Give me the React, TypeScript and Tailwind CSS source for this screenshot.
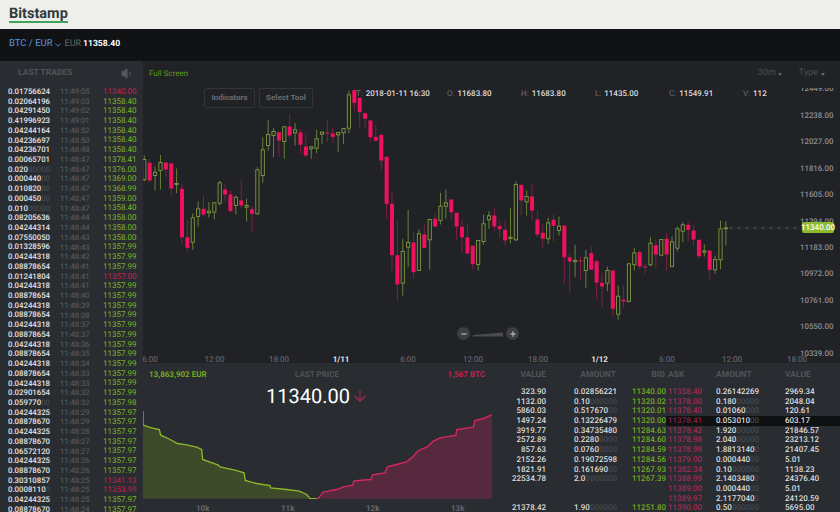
import { ChevronDown, Volume1, Plus, Minus, ArrowDown } from 'lucide-react'

// [wick top, body top, body bottom, wick bottom, up]
const candles: [number, number, number, number, number][] = [
  [155, 159, 179, 181, 1], [159, 162.3, 180, 182, 0], [166, 171.7, 175, 190, 1], [154.5, 162, 170, 189, 1],
  [161, 162, 169, 177, 0], [162, 163, 188, 195, 0], [168, 183, 184, 192.7, 1], [183, 188.3, 236.7, 243, 0],
  [219, 236.7, 247.3, 250.7, 0], [213, 217.3, 241.7, 249.3, 1], [201, 208.3, 216, 226, 1], [195, 208.3, 214, 216, 0],
  [201.7, 210.7, 212.3, 217, 1], [202, 202.3, 211.7, 219, 1], [180, 182.3, 202.7, 205, 1], [182.7, 189, 194, 200.7, 0],
  [190, 194, 210.7, 211, 0], [195, 196.7, 205, 214, 1], [180, 200, 205, 207, 0], [198.3, 205, 206.7, 221, 1],
  [205, 208.7, 213.3, 231.3, 0], [166.7, 169.3, 213.3, 214.3, 1], [136.7, 149.3, 175, 182.3, 1], [119.3, 134, 145, 150, 1],
  [127.7, 131, 135, 156.7, 1], [131.7, 131.7, 140, 156.7, 0], [126, 126.3, 141, 158.3, 1], [114, 126, 135, 138, 0],
  [122.3, 129.3, 132.3, 145, 1], [128.3, 132, 144.3, 153.3, 0], [132.7, 146, 155, 157.7, 0], [146, 146.3, 148.3, 158.3, 1],
  [129, 138.3, 147.7, 152.7, 1], [131, 131.7, 133.7, 143.3, 1], [120, 132, 133, 141.7, 0], [126.7, 133, 136.3, 141.7, 0],
  [131.5, 132, 134.3, 151.7, 1], [128, 128, 132.3, 143.3, 1], [90, 94.3, 127.7, 132.7, 1], [89, 89.7, 102.3, 110, 0],
  [97, 97.3, 111.7, 127.7, 0], [112, 112.7, 118.3, 128, 0], [120, 120, 136.7, 141, 0], [124.3, 136.3, 140.3, 140.5, 0],
  [134, 134.3, 160, 169.3, 0], [156, 156.3, 203.3, 218.3, 0], [191, 203.3, 254.7, 270, 0], [220, 254.7, 284, 300.7, 0],
  [238.3, 251, 282.7, 295, 1], [209.3, 242, 246.7, 266.7, 1], [230.7, 242, 271.7, 277.7, 0], [229, 233.3, 270, 270, 1],
  [224, 234, 247.3, 247.5, 0], [219, 219, 239.3, 269.3, 1], [212.7, 218.3, 226, 226.5, 0], [192.3, 205.7, 220, 224, 1],
  [189, 202.3, 205.7, 218.3, 1], [199, 199, 211.7, 219, 0], [212, 212.3, 226, 239.3, 0], [220, 226.3, 236.7, 251.7, 0],
  [224, 237, 253, 254, 0], [245, 245.3, 263.7, 269, 0], [240, 240, 264, 270, 1], [214, 223.3, 241, 244, 1],
  [210.7, 215.3, 219.3, 228.3, 1], [207.3, 215, 226, 230.7, 0], [220.7, 225.7, 228.7, 237.3, 0], [220, 229.3, 240, 244.7, 0],
  [207.3, 236.7, 238, 242.7, 1], [181, 184, 239.3, 240.7, 1], [184, 184.3, 200, 215, 0], [190, 196, 201.3, 215, 1],
  [184, 196, 210, 220, 0], [210, 219, 234, 236.7, 0], [223.3, 232.3, 238.3, 246.7, 0], [217.3, 222.3, 238.3, 243.3, 1],
  [213.3, 219.3, 225.3, 241.7, 0], [216, 225.7, 230, 235, 1], [225, 225, 256.7, 283.3, 0], [253, 256.7, 261, 292.3, 0],
  [244.3, 260, 261.3, 276.7, 1], [256, 260, 261, 279.3, 0], [249.3, 257.3, 270, 287.3, 1], [246, 252.7, 269.3, 269.5, 0],
  [259, 260.7, 282, 298.3, 0], [272.7, 282.3, 286, 306.7, 0], [266, 270, 282.7, 290.7, 1], [270, 270, 308.3, 316.7, 0],
  [285, 295.7, 313.7, 319.3, 1], [285, 299.3, 301, 307.3, 0], [263, 263.3, 301, 301.7, 1], [247.3, 252.3, 264.3, 270, 1],
  [250, 251.7, 266, 269.3, 0], [262.7, 266, 267, 273.3, 0], [236.7, 242.7, 264.3, 266, 1], [239, 244.7, 254, 268.3, 0],
  [239, 239, 254.7, 255, 1], [232.3, 238.3, 254, 270, 0], [236, 241.3, 266, 266.7, 1], [226, 228.3, 247.7, 250.7, 1],
  [221.7, 224.3, 230.7, 241.7, 1], [221.7, 224.3, 229.3, 241, 0], [225, 230, 239, 245, 0], [239, 239.3, 255.7, 257.7, 0],
  [244, 250.3, 251.7, 256, 1], [250, 250, 269.3, 279, 0], [255, 259, 269.3, 273.3, 1], [220, 228.3, 259.3, 268.7, 1],
  [220.7, 227.3, 228.3, 245, 1],
]

const priceAxis = [
  ['12449.00', 88], ['12238.00', 114.7], ['12027.00', 141], ['11816.00', 167.7], ['11605.00', 194], ['11394.00', 220.7],
  ['11183.00', 246.5], ['10972.00', 273], ['10761.00', 299.3], ['10550.00', 326], ['10339.00', 352.7],
] as const

const timeAxis = [
  ['6:00', 150, false], ['12:00', 214.5, false], ['18:00', 279, false], ['1/11', 341, true], ['6:00', 408, false],
  ['12:00', 473, false], ['18:00', 538, false], ['1/12', 599.5, true], ['6:00', 667, false], ['12:00', 732, false],
  ['18:00', 797, false],
] as const

// amount ("|" starts the dimmed zeros), time, price, sold
const trades: [string, string, string, boolean?][] = [
  ['0.01756624', '11:49:05', '11340.00', true], ['0.02064196', '11:49:03', '11358.40'], ['0.04291450', '11:49:02', '11358.40'],
  ['0.41996923', '11:49:01', '11358.40'], ['0.04244164', '11:48:52', '11358.40'], ['0.04236697', '11:48:50', '11358.40'],
  ['0.04236701', '11:48:48', '11358.40'], ['0.00065701', '11:48:47', '11378.41'], ['0.020|00000', '11:48:47', '11376.00'],
  ['0.000440|00', '11:48:47', '11369.00'], ['0.010820|00', '11:48:47', '11368.99'], ['0.000450|00', '11:48:47', '11359.00'],
  ['0.010|00000', '11:48:47', '11358.40'], ['0.08205636', '11:48:44', '11358.00'], ['0.04244314', '11:48:44', '11358.00'],
  ['0.07550050', '11:48:43', '11358.00'], ['0.01328596', '11:48:43', '11357.99'], ['0.04244318', '11:48:42', '11357.99'],
  ['0.08878654', '11:48:41', '11357.99'], ['0.01241804', '11:48:41', '11357.00', true], ['0.04244318', '11:48:41', '11357.99'],
  ['0.08878654', '11:48:40', '11357.99'], ['0.04244318', '11:48:39', '11357.99'], ['0.08878654', '11:48:38', '11357.99'],
  ['0.04244318', '11:48:37', '11357.99'], ['0.08878654', '11:48:37', '11357.99'], ['0.04244318', '11:48:36', '11357.99'],
  ['0.08878654', '11:48:35', '11357.99'], ['0.04244318', '11:48:34', '11357.99'], ['0.08878654', '11:48:33', '11357.99'],
  ['0.04244318', '11:48:33', '11357.99'], ['0.02901654', '11:48:32', '11357.99'], ['0.059770|00', '11:48:32', '11357.98'],
  ['0.04244325', '11:48:29', '11357.97'], ['0.08878670', '11:48:29', '11357.97'], ['0.04244325', '11:48:28', '11357.97'],
  ['0.08878670', '11:48:27', '11357.97'], ['0.06572120', '11:48:27', '11357.97'], ['0.04244325', '11:48:26', '11357.97'],
  ['0.08878670', '11:48:26', '11357.97'], ['0.30310857', '11:48:25', '11341.13', true], ['0.0008110|0', '11:48:25', '11353.99', true],
  ['0.04244325', '11:48:25', '11357.97'], ['0.08878670', '11:48:24', '11357.97'],
]

const book = [
  ['323.90', '0.02856221', '11340.00', '11358.40', '0.26142269', '2969.34'],
  ['1132.00', '0.10|000000', '11320.02', '11378.00', '0.180|00000', '2048.04'],
  ['5860.03', '0.517670|00', '11320.01', '11378.40', '0.01060|000', '120.61'],
  ['1497.24', '0.13226479', '11320.00', '11378.41', '0.053010|00', '603.17'],
  ['3919.77', '0.34735480', '11284.63', '11378.42', '1.920|00000', '21846.57'],
  ['2572.89', '0.2280|0000', '11284.60', '11378.98', '2.040|00000', '23213.12'],
  ['857.63', '0.0760|0000', '11284.59', '11378.99', '1.8813140|0', '21407.45'],
  ['2152.26', '0.19072598', '11284.56', '11379.00', '0.000440|00', '5.01'],
  ['1821.91', '0.161690|00', '11267.93', '11382.34', '0.10|000000', '1138.23'],
  ['22534.78', '2.0|0000000', '11267.39', '11388.99', '2.1403480|0', '24376.40'],
  ['', '', '', '11389.00', '0.000440|00', '5.01'],
  ['', '', '', '11389.97', '2.1177040|0', '24120.59'],
  ['21378.42', '1.90|000000', '11251.80', '11390.00', '0.50|000000', '5695.00'],
]

const ohlc = [
  ['T:', '2018-01-11 16:30', 'w-[91px]'], ['O:', '11683.80', 'w-[74px]'], ['H:', '11683.80', 'w-[74px]'],
  ['L:', '11435.00', 'w-[74px]'], ['C:', '11549.91', 'w-[74px]'], ['V:', '112', 'w-[40px]'],
]

const bidLine = '9,135 9,177 35,185 58,190 62,207 85,217 112,232 140,236 170,243 185,250 188,280 235,297 240,302 285,312 312,320 316,343 350,352 390,358 392,365 440,370 478,375 500,385 510,397 533,398'
const askLine = '533,398 550,378 590,370 610,362 638,357 642,344 692,340 698,326 735,320 742,302 770,295 800,287 820,270 835,253 860,243 880,225 900,215 948,207 950,190 1000,183 1005,163 1030,157 1056,145'

function Amount({ value }: { value: string }) {
  const [main, dim] = value.split('|')
  return (
    <>
      {main}
      {dim && <span className="text-[#44484e]">{dim}</span>}
    </>
  )
}

function Chart() {
  return (
    <svg viewBox="143 61 697 301" className="absolute inset-0 w-full h-full" fontFamily="Roboto, sans-serif">
      {candles.map(([wt, bt, bb, wb, up], i) => {
        const x = 144.3 + i * 5.385
        return (
          <g key={i}>
            <line x1={x} x2={x} y1={wt} y2={wb} stroke={up ? '#66803a' : '#7e1f47'} strokeWidth="1" />
            {up ? (
              <rect x={x - 1.6} y={bt} width="3.2" height={Math.max(bb - bt, 1)} fill="#212226" stroke="#7f9a3c" strokeWidth="0.9" />
            ) : (
              <rect x={x - 2} y={bt} width="4" height={Math.max(bb - bt, 1)} fill="#f0105f" />
            )}
          </g>
        )
      })}
      <line x1="729" x2="802" y1="227.5" y2="227.5" stroke="#50545a" strokeDasharray="4 4" />
      {priceAxis.map(([label, y]) => (
        <text key={label} x="833.5" y={y + 2.8} textAnchor="end" fontSize="7.9" fontWeight="500" fill="#8b8e92">{label}</text>
      ))}
      <rect x="780" y="61" width="60" height="26.5" fill="#212226" />
      {timeAxis.map(([label, x, bold], i) => (
        <text key={i} x={x} y="361" textAnchor="middle" fontSize="8" fontWeight={bold ? 700 : 400} fill={bold ? '#e6e6e6' : '#6f7276'}>{label}</text>
      ))}
      <path d="M473 334.5 L503 332 L503 336 L473 336 Z" fill="#4a4c51" />
    </svg>
  )
}

function BookRow({ row, active }: { row: string[]; active: boolean }) {
  return (
    <div className="relative flex h-[9.72px] items-center leading-none font-medium">
      {active && <div className="absolute right-0 top-0 bottom-0 left-[174px] bg-[#0f1012]" />}
      <span className="relative w-[54px] text-right text-[#dcdcdc]">{row[0]}</span>
      <span className="relative ml-[28px] w-[45px] text-[#dcdcdc]"><Amount value={row[1]} /></span>
      <span className="relative ml-[13px] w-[33px] text-[#76a821]">{row[2]}</span>
      <span className={`relative ml-[3px] w-[33px] ${active ? 'text-[#8a1f42]' : 'text-[#a52a52]'}`}>{row[3]}</span>
      <span className="relative ml-[15px] w-[45px] text-[#dcdcdc]"><Amount value={row[4]} /></span>
      <span className="relative ml-[24px] text-[#dcdcdc]">{row[5]}</span>
    </div>
  )
}

export default function App() {
  return (
    <div className="h-[512px] w-[840px] overflow-hidden flex flex-col bg-[#212226] font-['Roboto',sans-serif] [text-rendering:geometricPrecision]">
      <header className="h-[29px] shrink-0 bg-[#eeeeea] flex items-center pl-[9px]">
        <span className="text-[14.5px] leading-[15px] font-bold text-[#2f3a3a] border-b-2 border-[#3fa35b]">Bitstamp</span>
      </header>

      <nav className="h-[32px] shrink-0 bg-[#101214] flex items-center pl-[9px] text-[9.5px] pb-[1px]">
        <span className="text-[#5a9be0]">BTC / EUR</span>
        <ChevronDown className="w-[10px] h-[10px] text-[#5a9be0]" />
        <span className="ml-[2px] text-[9px] text-[#65686c]">EUR</span>
        <span className="ml-[2px] text-[8.6px] text-white font-bold">11358.40</span>
      </nav>

      <div className="flex flex-1 min-h-0">
        <aside className="w-[143px] shrink-0 bg-[#292d32] overflow-hidden">
          <div className="h-[26px] flex items-center justify-between pl-[18px] pr-[9px] pb-[1px]">
            <span className="text-[8.5px] font-bold text-[#50545a]">LAST TRADES</span>
            <Volume1 className="w-[13px] h-[13px] text-[#55595f] fill-[#55595f]" />
          </div>
          {trades.map(([amount, time, price, sold], i) => (
            <div key={i} className="flex h-[9.72px] items-center pl-[8px] text-[8px] leading-none">
              <span className="w-[52px] text-[7.8px] font-medium text-[#e4e4e4]"><Amount value={amount} /></span>
              <span className="w-[43px] text-[7.7px] text-[#5c6066]">{time}</span>
              <span className={sold ? 'text-[#c3204f]' : 'text-[#7fb324]'}>{price}</span>
            </div>
          ))}
        </aside>

        <main className="flex-1 min-w-0 flex flex-col">
          <section className="relative h-[302px] shrink-0 bg-[#212226] overflow-hidden">
            <Chart />
            <div className="absolute left-[6px] top-[7px] text-[8px] text-[#5f9a16]">Full Screen</div>
            <div className="absolute right-[15px] top-[6px] flex items-center gap-[17px] text-[9px] text-[#4d5055]">
              <span className="flex items-center gap-[2px]">30m<span className="w-0 h-0 border-x-[2.5px] border-x-transparent border-t-[3px] border-t-[#65686c] mt-[2px]" /></span>
              <span className="flex items-center gap-[3px]">Type<span className="w-0 h-0 border-x-[2.5px] border-x-transparent border-t-[3px] border-t-[#65686c] mt-[2px]" /></span>
            </div>
            <div className="absolute left-[61px] top-[27px] flex gap-[4px] text-[8px] font-bold text-[#6a6d72]">
              <button className="h-[20px] w-[51px] rounded-[2px] border border-[#323438]">Indicators</button>
              <button className="h-[20px] w-[54px] rounded-[2px] border border-[#323438]">Select Tool</button>
            </div>
            <div className="absolute left-[213px] top-[28px] flex text-[8px] leading-[10px]">
              {ohlc.map(([k, v, w]) => (
                <span key={k} className={`flex gap-[3px] ${w}`}>
                  <span className="text-[#6a6d72]">{k}</span>
                  <span className="font-medium text-[#dedede]">{v}</span>
                </span>
              ))}
            </div>
            <div className="absolute left-[659px] top-[161px] w-[32px] h-[11px] rounded-[2px] bg-[#8dbb2c] text-white text-[8px] font-medium flex items-center justify-center">11340.00</div>
            <div className="absolute left-[314px] top-[266px] flex items-center gap-[36px]">
              <span className="w-[13px] h-[13px] rounded-full bg-[#3c3e43] flex items-center justify-center"><Minus className="w-[8px] h-[8px] text-[#c8c8c8]" strokeWidth={3} /></span>
              <span className="w-[13px] h-[13px] rounded-full bg-[#3c3e43] flex items-center justify-center"><Plus className="w-[8px] h-[8px] text-[#c8c8c8]" strokeWidth={3} /></span>
            </div>
          </section>

          <div className="flex-1 flex min-h-0 bg-[#292c31]">
            <section className="w-[349px] shrink-0 flex flex-col">
              <div className="h-[19px] grid grid-cols-3 items-center pl-[6px] pr-[7px] pt-[5px] text-[8px] font-bold leading-none">
                <span className="text-[#76a821]">13,863,902 EUR</span>
                <span className="text-center text-[#50545a]">LAST PRICE</span>
                <span className="text-right text-[#c3204f]">1,567 BTC</span>
              </div>
              <div className="h-[28px] flex items-center justify-center text-[20px] text-white">
                11340.00
                <ArrowDown className="w-[18px] h-[18px] ml-[1px] text-[#a52a52]" strokeWidth={1.5} />
              </div>
              <svg viewBox="9 135 1047 263" className="w-[349px] h-[88px] shrink-0 mt-[1px]">
                <polygon points={`${bidLine} 9,398`} fill="#3f4a2b" />
                <polygon points={`${askLine} 1056,398`} fill="#57293e" />
                <polyline points={bidLine} fill="none" stroke="#8ab92a" strokeWidth="4" />
                <polyline points={askLine} fill="none" stroke="#d8285f" strokeWidth="4" />
              </svg>
              <div className="relative flex-1 text-[8px] font-bold text-[#65686c]">
                <span className="absolute left-[53px] top-[4px]">10k</span>
                <span className="absolute left-[138px] top-[4px]">11k</span>
                <span className="absolute left-[223px] top-[4px]">12k</span>
                <span className="absolute left-[308px] top-[4px]">13k</span>
              </div>
            </section>

            <section className="flex-1 min-w-0 text-[8px] overflow-hidden">
              <div className="flex h-[24px] items-center font-bold text-[#50545a] text-[8.5px] pt-[1px]">
                <span className="w-[54px] text-right">VALUE</span>
                <span className="ml-[28px] w-[42px] text-right">AMOUNT</span>
                <span className="ml-[16px] w-[33px] text-right">BID</span>
                <span className="ml-[3px] w-[33px]">ASK</span>
                <span className="ml-[15px] w-[45px]">AMOUNT</span>
                <span className="ml-[24px]">VALUE</span>
              </div>
              {book.map((row, i) => (
                <BookRow key={i} row={row} active={i === 3} />
              ))}
            </section>
          </div>
        </main>
      </div>
    </div>
  )
}
